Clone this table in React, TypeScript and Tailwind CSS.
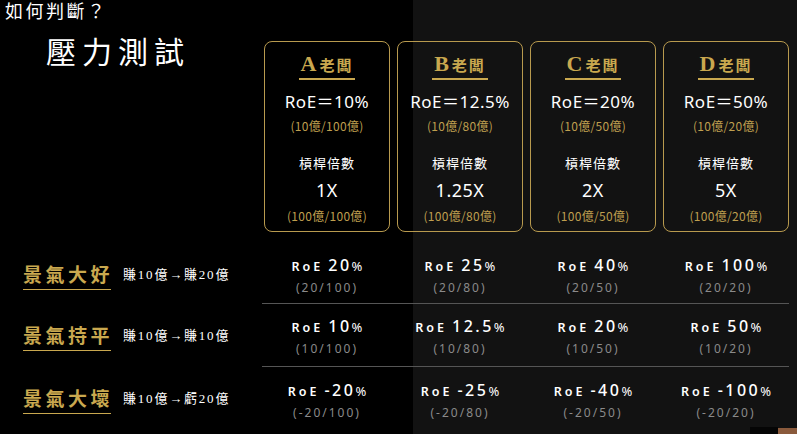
const cards = [
  { k: "A", roe: "10%", r1: "(10億/100億)", lev: "1X", r2: "(100億/100億)" },
  { k: "B", roe: "12.5%", r1: "(10億/80億)", lev: "1.25X", r2: "(100億/80億)" },
  { k: "C", roe: "20%", r1: "(10億/50億)", lev: "2X", r2: "(100億/50億)" },
  { k: "D", roe: "50%", r1: "(10億/20億)", lev: "5X", r2: "(100億/20億)" },
];

const rows = [
  {
    label: "景氣大好",
    to: "賺20億",
    cells: [
      ["20", "(20/100)"],
      ["25", "(20/80)"],
      ["40", "(20/50)"],
      ["100", "(20/20)"],
    ],
  },
  {
    label: "景氣持平",
    to: "賺10億",
    cells: [
      ["10", "(10/100)"],
      ["12.5", "(10/80)"],
      ["20", "(10/50)"],
      ["50", "(10/20)"],
    ],
  },
  {
    label: "景氣大壞",
    to: "虧20億",
    cells: [
      ["-20", "(-20/100)"],
      ["-25", "(-20/80)"],
      ["-40", "(-20/50)"],
      ["-100", "(-20/20)"],
    ],
  },
];

const cjk = "font-['Noto_Sans_CJK_TC',sans-serif]";

const BossCard = ({ card }: { card: (typeof cards)[number] }) => (
  <div className="w-[126px] h-[191px] rounded-[8px] border border-[#b89a4e] flex flex-col items-center">
    <div className="mt-[11px] h-[22px] flex items-end leading-[22px] text-[#c9a84f]">
      <span className="font-['Liberation_Serif',serif] font-bold text-[22px] mr-[3px]">
        {card.k}
      </span>
      <span className={`${cjk} font-bold text-[15px] tracking-[2px] leading-[20px]`}>
        老闆
      </span>
    </div>
    <div className="mt-[3px] h-[1.5px] w-[56px] bg-[#c9a84f]" />
    <div className="mt-[12px] leading-[20px] text-[17px] tracking-[0.5px] text-white font-['Noto_Sans','Noto_Sans_CJK_TC',sans-serif]">
      RoE＝{card.roe}
    </div>
    <div className={`mt-[6px] leading-[16px] text-[12px] tracking-[0.3px] text-[#bf9f4f] ${cjk}`}>
      {card.r1}
    </div>
    <div className={`mt-[20px] leading-[18px] text-[13px] tracking-[1px] text-white ${cjk}`}>
      槓桿倍數
    </div>
    <div className="mt-[7px] leading-[22px] text-[18px] tracking-[0.5px] text-white font-['Noto_Sans',sans-serif]">
      {card.lev}
    </div>
    <div className={`mt-[7px] leading-[16px] text-[12px] tracking-[0.3px] text-[#bf9f4f] ${cjk}`}>
      {card.r2}
    </div>
  </div>
);

const Cell = ({ value, ratio }: { value: string; ratio: string }) => (
  <div className="w-[126px] flex flex-col items-center font-['Noto_Sans',sans-serif]">
    <div className="flex items-baseline leading-[20px] text-white">
      <span className="text-[12.5px] tracking-[3px] font-semibold">RoE</span>
      <span className="ml-[5px] text-[16px] tracking-[2.5px] font-medium">{value}</span>
      <span className="text-[13px]">%</span>
    </div>
    <div className="mt-[2px] leading-[18px] text-[12px] tracking-[2px] text-[#8a8a8a]">
      {ratio}
    </div>
  </div>
);

export default function App() {
  return (
    <div className="relative w-[797px] h-[434px] overflow-hidden bg-[linear-gradient(to_right,#000_413px,#121212_413px)] text-white">
      <div className="flex">
        <div className="w-[264px] shrink-0">
          <div className={`pl-[5px] pt-[1px] leading-[19px] text-[18px] tracking-[2.5px] ${cjk}`}>
            如何判斷？
          </div>
          <div className={`pl-[46px] mt-[13px] leading-[34px] text-[30px] tracking-[6px] ${cjk}`}>
            壓力測試
          </div>
        </div>
        <div className="pt-[41px] flex gap-[7px]">
          {cards.map((c) => (
            <BossCard key={c.k} card={c} />
          ))}
        </div>
      </div>

      <div className="mt-[13px]">
        {rows.map((r, i) => (
          <div key={r.label} className={`flex ${i === 0 ? "h-[59px]" : "h-[63px]"}`}>
            <div className="w-[262px] shrink-0 pl-[23px] pt-[4px] flex items-center">
              <div className="flex flex-col">
                <span
                  className={`${cjk} font-bold text-[19px] tracking-[3.5px] leading-[22px] text-[#c9a84f]`}
                >
                  {r.label}
                </span>
                <div className="mt-[4px] h-[1.5px] w-[88px] bg-[#c9a84f]" />
              </div>
              <span className="ml-[10px] mb-[4px] text-[13px] tracking-[1.8px] leading-[18px] text-white font-['Liberation_Serif','Noto_Sans_CJK_TC',serif]">
                賺10億→{r.to}
              </span>
            </div>
            <div
              className={`w-[527px] pt-[4px] flex gap-[7px] items-center pl-[2px] ${
                i < rows.length - 1 ? "border-b border-[#555]" : ""
              }`}
            >
              {r.cells.map(([v, ratio]) => (
                <Cell key={ratio} value={v} ratio={ratio} />
              ))}
            </div>
          </div>
        ))}
      </div>

      <div className="absolute left-[750px] top-[427px] w-[28px] h-[7px] bg-[#050505]" />
      <div className="absolute left-[778px] top-[428px] w-[19px] h-[6px] bg-[#8a5a3c]" />
    </div>
  );
}
